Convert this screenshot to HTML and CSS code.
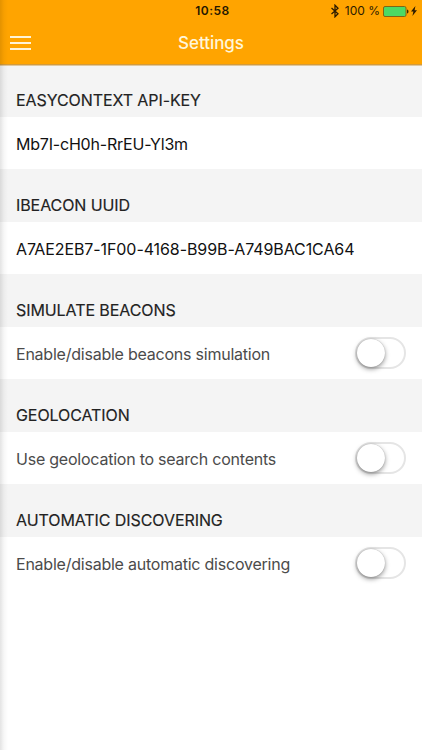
FILE: index.html
```html
<!DOCTYPE html>
<html lang="en">
<head>
<meta charset="utf-8">
<title>Settings</title>
<link rel="stylesheet" href="styles.css">
</head>
<body>
<div class="screen">
  <header class="header">
    <div class="status">
      <span></span>
      <span class="time">10:58</span>
      <div class="indicators">
        <svg class="bluetooth" width="8" height="14" viewBox="0 0 8 14"><path d="M.5 4 7 9.8 4 12.8V1.2l3 3L.5 10"/></svg>
        <span class="percent">100 %</span>
        <svg class="battery" width="26" height="11" viewBox="0 0 26 11"><rect class="cell" x=".5" y=".5" width="22.5" height="10" rx="1.5"/><path class="cap" d="M24 3.5c2 .5 2 3.5 0 4z"/></svg>
        <svg class="bolt" width="6" height="10" viewBox="0 0 6 10"><path d="M4.4 0 0 5.6h2.4L1.4 10 6 4.2H3.6z"/></svg>
      </div>
    </div>
    <nav class="navbar">
      <svg class="menu" width="21" height="15" viewBox="0 0 21 15"><path d="M0 1h21M0 7h21M0 13h21"/></svg>
      <h1 class="title">Settings</h1>
      <span></span>
    </nav>
  </header>
  <main>
    <section>
      <h2 class="heading">EASYCONTEXT API-KEY</h2>
      <div class="row value"><span class="label">Mb7I-cH0h-RrEU-Yl3m</span></div>
    </section>
    <section>
      <h2 class="heading">IBEACON UUID</h2>
      <div class="row value"><span class="label uuid">A7AE2EB7-1F00-4168-B99B-A749BAC1CA64</span></div>
    </section>
    <section>
      <h2 class="heading">SIMULATE BEACONS</h2>
      <label class="row"><span class="label">Enable/disable beacons simulation</span><span class="toggle"></span></label>
    </section>
    <section>
      <h2 class="heading">GEOLOCATION</h2>
      <label class="row"><span class="label">Use geolocation to search contents</span><span class="toggle"></span></label>
    </section>
    <section>
      <h2 class="heading">AUTOMATIC DISCOVERING</h2>
      <label class="row"><span class="label">Enable/disable automatic discovering</span><span class="toggle"></span></label>
    </section>
  </main>
  <div class="edge"></div>
</div>
</body>
</html>
```
FILE: styles.css
```css
* { box-sizing: border-box; }
body { margin: 0; background: #fff; font-family: Inter, "Liberation Sans", sans-serif; }
.screen { position: relative; height: 750px; overflow: hidden; }
.header { height: 66px; background: #ffa400; border-bottom: 1px solid #e0c79c; box-shadow: inset 0 -1px #d39b3c; }
.status { display: grid; grid-template-columns: 1fr auto 1fr; align-items: center; height: 22px; padding-right: 5px; }
.time { font-size: 12px; font-weight: 600; letter-spacing: 0.45px; line-height: 14px; margin-bottom: 1px; color: #241700; padding-left: 8px; }
.indicators { display: flex; align-items: center; justify-content: flex-end; }
.bluetooth { fill: none; stroke: #2b1b00; stroke-width: 1.3; margin-right: 6px; }
.percent { font-size: 12px; line-height: 14px; margin-bottom: 1px; color: #2b1b00; margin-right: 3px; }
.cell { fill: #4cd964; stroke: #806515; stroke-width: 1; }
.cap { fill: #3c2a00; }
.bolt { fill: #2b1b00; margin-left: 2px; }
.navbar { display: grid; grid-template-columns: 1fr auto 1fr; align-items: center; height: 43px; padding: 0 10px; }
.menu { stroke: #fff4d8; stroke-width: 2; margin-top: -1px; }
.title { margin: -1px 0 0; font-size: 17px; font-weight: 500; line-height: 20px; color: #fff6da; letter-spacing: -0.05px; }
.heading { display: flex; align-items: center; height: 53px; margin: 0; padding: 18px 16px 0; background: #f4f4f4; font-size: 16px; font-weight: 400; line-height: 20px; letter-spacing: -0.08px; color: #222; -webkit-text-stroke: 0.15px #222; }
section:first-child .heading { height: 51px; }
.row { display: flex; align-items: center; justify-content: space-between; height: 52px; padding: 2px 16px 0; background: #fff; font-size: 16px; line-height: 20px; color: #4b4b4b; white-space: nowrap; }
.value { color: #111; }
.label { letter-spacing: -0.23px; }
.value .label { letter-spacing: -0.2px; }
.value .uuid { letter-spacing: -0.08px; }
section:first-child .heading { padding-top: 17px; }
.toggle { width: 51px; height: 32px; margin-top: -2px; border: 2px solid #e5e5e5; border-radius: 16px; background: #fff; }
.toggle::before { content: ""; display: block; width: 28px; height: 28px; border-radius: 50%; background: #fff; box-shadow: 0 2px 5px rgba(0, 0, 0, 0.42), 0 0 1px rgba(0, 0, 0, 0.3); }
.edge { position: absolute; top: 0; bottom: 0; left: 0; width: 8px; background: linear-gradient(to right, rgba(0, 0, 0, 0.11), rgba(0, 0, 0, 0.03) 50%, transparent); }
```
